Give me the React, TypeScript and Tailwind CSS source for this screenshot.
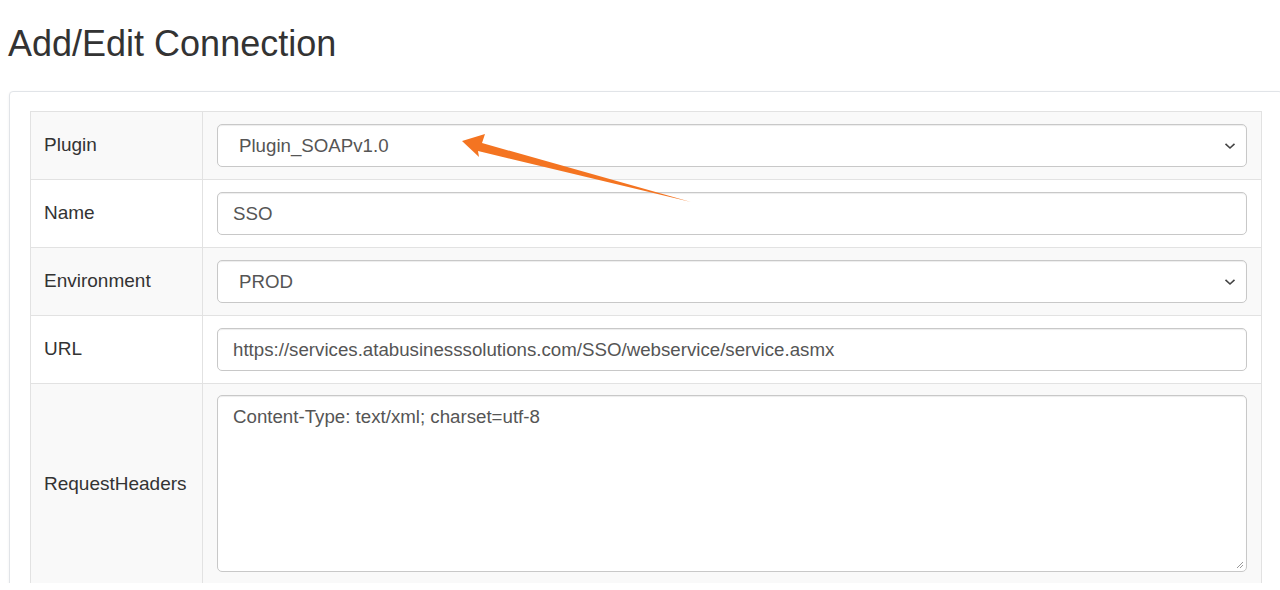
const font = "font-['Liberation_Sans','Helvetica_Neue',Arial,sans-serif]";

function Chevron() {
  return (
    <svg width="12" height="8" viewBox="0 0 12 8" className="absolute right-[10px] top-1/2 -translate-y-1/2">
      <path d="M1.5 1.8 L6 6 L10.5 1.8" fill="none" stroke="#444" strokeWidth="1.6" />
    </svg>
  );
}

function SelectBox({ value }: { value: string }) {
  return (
    <div className="relative h-[43px] w-full rounded-[5px] border border-[#c8c8c8] bg-white pl-[21px] text-[18.7px] leading-[41px] text-[#555] shadow-[inset_0_1px_1px_rgba(0,0,0,0.075)]">
      {value}
      <Chevron />
    </div>
  );
}

function TextBox({ value }: { value: string }) {
  return (
    <div className="h-[43px] w-full rounded-[5px] border border-[#c8c8c8] bg-white pl-[15px] text-[18.7px] leading-[41px] text-[#555] shadow-[inset_0_1px_1px_rgba(0,0,0,0.075)]">
      {value}
    </div>
  );
}

function Row({ label, striped, children }: { label: string; striped?: boolean; children: React.ReactNode }) {
  return (
    <div className={`flex border-b border-[#e2e2e2] ${striped ? "bg-[#f9f9f9]" : "bg-white"}`}>
      <div className="flex w-[172px] shrink-0 items-center border-r border-[#e2e2e2] pl-[13px] text-[19px] text-[#333]">
        {label}
      </div>
      <div className="flex-1 px-[14px] py-[12px]">{children}</div>
    </div>
  );
}

export default function App() {
  return (
    <div className={`h-[583px] w-[1280px] overflow-hidden bg-white ${font} relative`}>
      <h2 className="pl-2 pt-[26px] text-[36px] font-normal leading-none text-[#333]">Add/Edit Connection</h2>
      <div className="ml-[9px] mt-[29px] w-[1274px] rounded-[4px] border border-[#e1e4e8] bg-white px-[20px] pt-[19px] pb-[20px] shadow-[0_1px_3px_rgba(0,0,0,0.06)]">
        <div className="border-l border-r border-t border-[#e2e2e2]">
          <Row label="Plugin" striped>
            <SelectBox value="Plugin_SOAPv1.0" />
          </Row>
          <Row label="Name">
            <TextBox value="SSO" />
          </Row>
          <Row label="Environment" striped>
            <SelectBox value="PROD" />
          </Row>
          <Row label="URL">
            <TextBox value="https://services.atabusinesssolutions.com/SSO/webservice/service.asmx" />
          </Row>
          <div className="flex h-[260px] bg-[#f9f9f9]">
            <div className="flex h-[200px] w-[172px] shrink-0 items-center border-r border-[#e2e2e2] pl-[13px] text-[19px] text-[#333]">
              RequestHeaders
            </div>
            <div className="flex-1 px-[14px] pt-[11px]">
              <div className="relative h-[177px] w-full rounded-[5px] border border-[#c8c8c8] bg-white px-[15px] pt-[8px] text-[18.7px] leading-[26px] text-[#555] shadow-[inset_0_1px_1px_rgba(0,0,0,0.075)]">
                Content-Type: text/xml; charset=utf-8
                <svg width="10" height="10" viewBox="0 0 10 10" className="absolute bottom-[2px] right-[2px]">
                  <path d="M9 3 L3 9 M9 6 L6 9" stroke="#999" strokeWidth="1" />
                </svg>
              </div>
            </div>
          </div>
        </div>
      </div>
      <svg width="1280" height="583" className="pointer-events-none absolute left-0 top-0">
        <polygon points="462,141 485,134 482,143 691,202 478,151 479,157" fill="#f47421" />
      </svg>
    </div>
  );
}
